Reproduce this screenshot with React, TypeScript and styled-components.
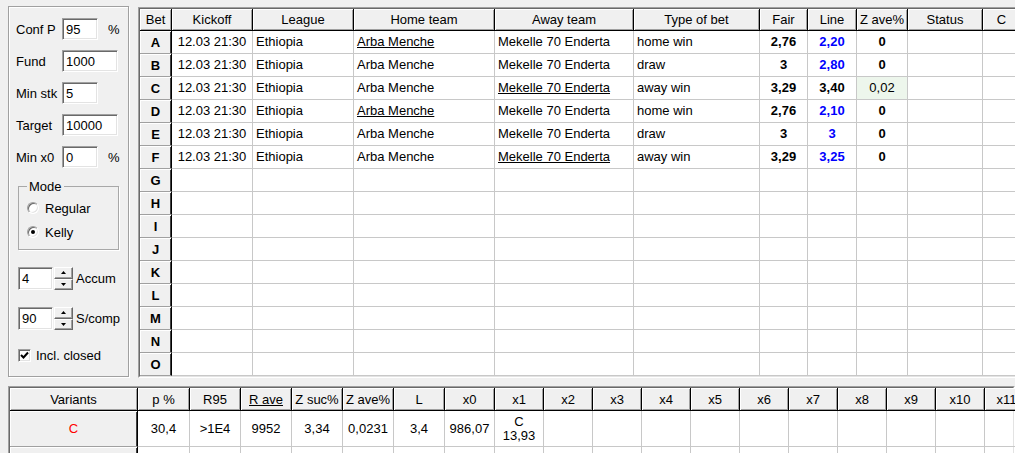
import styled, { createGlobalStyle } from "styled-components";

const GlobalStyle = createGlobalStyle`
  html, body {
    margin: 0;
    background: #f0f0f0;
    overflow: hidden;
  }
  body {
    font-family: "Liberation Sans", Arial, sans-serif;
    font-size: 13px;
    color: #000;
  }
`;

const Screen = styled.div`
  width: 1015px;
  height: 453px;
  box-sizing: border-box;
  padding: 6px 0 0 8px;
  overflow: hidden;
  display: flex;
  flex-direction: column;
  gap: 8px;
`;

const TopArea = styled.div`
  display: flex;
  align-items: flex-start;
  gap: 9px;
`;

const SidePanel = styled.div`
  flex-shrink: 0;
  width: 121px;
  height: 371px;
  box-sizing: border-box;
  border: 1px solid #a0a0a0;
  box-shadow: inset 1px 1px 0 #fff, 1px 1px 0 #fff;
  padding: 11px 0 0 7px;
  display: flex;
  flex-direction: column;
`;

const FieldRow = styled.div`
  display: flex;
  align-items: center;
  height: 22px;
  margin-bottom: 10px;
`;

const FieldLabel = styled.span`
  width: 46px;
  white-space: nowrap;
`;

const Sunken = styled.div`
  box-sizing: border-box;
  background: #fff;
  border: 1px solid;
  border-color: #a0a0a0 #fff #fff #a0a0a0;
  box-shadow: inset 1px 1px 0 #696969, inset -1px -1px 0 #e3e3e3;
`;

const TextBox = styled(Sunken)<{ $w: number; $h?: number }>`
  width: ${({ $w }) => $w}px;
  height: ${({ $h }) => $h ?? 22}px;
  padding-left: 3px;
  display: flex;
  align-items: center;
`;

const Suffix = styled.span`
  margin-left: 10px;
`;

const ModeBox = styled.fieldset`
  margin: 1px 0 0 2px;
  width: 101px;
  box-sizing: border-box;
  border: 1px solid #a8a8a8;
  box-shadow: 1px 1px 0 #fff;
  padding: 2px 0 5px 8px;
`;

const ModeLegend = styled.legend`
  padding: 0 2px;
  line-height: 15px;
`;

const RadioRow = styled.label`
  display: flex;
  align-items: center;
  gap: 6px;
  height: 24px;
`;

const RadioDot = styled(Sunken)<{ $checked: boolean }>`
  width: 12px;
  height: 12px;
  border-radius: 50%;
  display: flex;
  align-items: center;
  justify-content: center;

  &::after {
    content: "";
    width: 4px;
    height: 4px;
    border-radius: 50%;
    background: ${({ $checked }) => ($checked ? "#000" : "transparent")};
  }
`;

const SpinRow = styled.div<{ $top: number }>`
  display: flex;
  align-items: center;
  margin: ${({ $top }) => $top}px 0 0 2px;
  height: 23px;
`;

const SpinButtons = styled.div`
  display: flex;
  flex-direction: column;
  width: 19px;
  height: 23px;
  margin-left: 1px;
`;

const SpinHalf = styled.div`
  flex: 1;
  box-sizing: border-box;
  background: #f0f0f0;
  border: 1px solid;
  border-color: #fff #696969 #696969 #fff;
  box-shadow: inset -1px -1px 0 #a0a0a0;
  display: flex;
  align-items: center;
  justify-content: center;
`;

const SpinLabel = styled.span`
  margin-left: 3px;
`;

const CheckRow = styled.label`
  display: flex;
  align-items: center;
  gap: 5px;
  margin: 18px 0 0 2px;
`;

const CheckBox = styled(Sunken)`
  width: 13px;
  height: 13px;
  display: flex;
  align-items: center;
  justify-content: center;
`;

const GridFrame = styled.div<{ $top?: number }>`
  flex-shrink: 0;
  margin-top: ${({ $top }) => $top ?? 0}px;
  border: 1px solid;
  border-color: #a0a0a0 #fff #fff #a0a0a0;
`;

const GridBody = styled.div<{ $cols: number[]; $rows: string }>`
  border: 1px solid;
  border-color: #696969 #e3e3e3 #e3e3e3 #696969;
  background: #fff;
  display: grid;
  grid-template-columns: ${({ $cols }) => $cols.map((c) => `${c}px`).join(" ")};
  grid-template-rows: ${({ $rows }) => $rows};
`;

const HeadCell = styled.div<{ $underline?: boolean }>`
  box-sizing: border-box;
  background: #f0f0f0;
  border-right: 1px solid #000;
  border-bottom: 1px solid #000;
  box-shadow: inset 1px 1px 0 #fff, inset -1px -1px 0 #a0a0a0;
  display: flex;
  align-items: center;
  justify-content: center;
  white-space: nowrap;
  overflow: hidden;
  text-decoration: ${({ $underline }) => ($underline ? "underline" : "none")};
`;

const RowHead = styled.div<{ $color?: string; $bold?: boolean }>`
  box-sizing: border-box;
  background: #f0f0f0;
  border-right: 1px solid #000;
  border-bottom: 1px solid #a0a0a0;
  box-shadow: inset 1px 1px 0 #fff, inset -1px 0 0 #404040;
  display: flex;
  align-items: center;
  justify-content: center;
  color: ${({ $color }) => $color ?? "#000"};
  font-weight: ${({ $bold }) => ($bold ? 700 : 400)};
`;

const Cell = styled.div<{
  $center?: boolean;
  $bold?: boolean;
  $color?: string;
  $bg?: string;
  $underline?: boolean;
}>`
  box-sizing: border-box;
  border-right: 1px solid #c8c8c8;
  border-bottom: 1px solid #c8c8c8;
  padding: 0 3px;
  background: ${({ $bg }) => $bg ?? "transparent"};
  display: flex;
  flex-direction: column;
  align-items: ${({ $center }) => ($center ? "center" : "flex-start")};
  justify-content: center;
  line-height: 14px;
  white-space: nowrap;
  overflow: hidden;
  font-weight: ${({ $bold }) => ($bold ? 700 : 400)};
  color: ${({ $color }) => $color ?? "#000"};
  text-decoration: ${({ $underline }) => ($underline ? "underline" : "none")};
`;

const MAIN_COLS = [32, 81, 101, 141, 139, 126, 48, 49, 51, 75, 38, 60];
const MAIN_HEAD = ["Bet", "Kickoff", "League", "Home team", "Away team", "Type of bet", "Fair", "Line", "Z ave%", "Status", "C", ""];
const LETTERS = "ABCDEFGHIJKLMNO".split("");

const BETS = [
  { home: true, away: false, type: "home win", fair: "2,76", line: "2,20", blue: true, z: "0" },
  { home: false, away: false, type: "draw", fair: "3", line: "2,80", blue: true, z: "0" },
  { home: false, away: true, type: "away win", fair: "3,29", line: "3,40", blue: false, z: "0,02" },
  { home: true, away: false, type: "home win", fair: "2,76", line: "2,10", blue: true, z: "0" },
  { home: false, away: false, type: "draw", fair: "3", line: "3", blue: true, z: "0" },
  { home: false, away: true, type: "away win", fair: "3,29", line: "3,25", blue: true, z: "0" },
];

const VAR_COLS = [128, 52, 51, 51, 51, 51, 51, 50, 49, 49, 49, 49, 49, 49, 49, 49, 49, 49, 44, 40];
const VAR_HEAD = ["Variants", "p %", "R95", "R ave", "Z suc%", "Z ave%", "L", "x0", "x1", "x2", "x3", "x4", "x5", "x6", "x7", "x8", "x9", "x10", "x11", ""];
const VAR_ROW = ["30,4", ">1E4", "9952", "3,34", "0,0231", "3,4", "986,07"];

function Arrow({ up }: { up: boolean }) {
  return (
    <svg width="5" height="3" viewBox="0 0 5 3">
      <polygon points={up ? "2.5,0 5,3 0,3" : "0,0 5,0 2.5,3"} fill="#000" />
    </svg>
  );
}

function Spin({ value, label, top }: { value: string; label: string; top: number }) {
  return (
    <SpinRow $top={top}>
      <TextBox $w={35} $h={23}>{value}</TextBox>
      <SpinButtons>
        <SpinHalf><Arrow up /></SpinHalf>
        <SpinHalf><Arrow up={false} /></SpinHalf>
      </SpinButtons>
      <SpinLabel>{label}</SpinLabel>
    </SpinRow>
  );
}

function BetGrid() {
  return (
    <GridFrame $top={1}>
      <GridBody $cols={MAIN_COLS} $rows="22px repeat(15, 23px)">
        {MAIN_HEAD.map((h, i) => (
          <HeadCell key={i}>{h}</HeadCell>
        ))}
        {LETTERS.map((letter, r) => {
          const bet = BETS[r];
          if (!bet) {
            return [
              <RowHead key={letter} $bold>{letter}</RowHead>,
              ...MAIN_COLS.slice(1).map((_, c) => <Cell key={`${letter}${c}`} />),
            ];
          }
          return [
            <RowHead key={letter} $bold>{letter}</RowHead>,
            <Cell key={`${letter}k`} $center>12.03 21:30</Cell>,
            <Cell key={`${letter}l`}>Ethiopia</Cell>,
            <Cell key={`${letter}h`} $underline={bet.home}>Arba Menche</Cell>,
            <Cell key={`${letter}a`} $underline={bet.away}>Mekelle 70 Enderta</Cell>,
            <Cell key={`${letter}t`}>{bet.type}</Cell>,
            <Cell key={`${letter}f`} $center $bold>{bet.fair}</Cell>,
            <Cell key={`${letter}n`} $center $bold $color={bet.blue ? "#0000ff" : "#000"}>
              {bet.line}
            </Cell>,
            <Cell key={`${letter}z`} $center $bold={bet.z === "0"} $bg={bet.z === "0" ? undefined : "#edf6ec"}>
              {bet.z}
            </Cell>,
            <Cell key={`${letter}s`} />,
            <Cell key={`${letter}c`} />,
            <Cell key={`${letter}x`} />,
          ];
        })}
      </GridBody>
    </GridFrame>
  );
}

function VariantGrid() {
  return (
    <GridFrame>
      <GridBody $cols={VAR_COLS} $rows="23px 36px 36px">
        {VAR_HEAD.map((h, i) => (
          <HeadCell key={i} $underline={h === "R ave"}>{h}</HeadCell>
        ))}
        <RowHead $color="#ff0000">C</RowHead>
        {VAR_ROW.map((v, i) => (
          <Cell key={i} $center>{v}</Cell>
        ))}
        <Cell $center>
          <span>C</span>
          <span>13,93</span>
        </Cell>
        {VAR_COLS.slice(9).map((_, i) => (
          <Cell key={`e${i}`} />
        ))}
        <RowHead />
        {VAR_COLS.slice(1).map((_, i) => (
          <Cell key={`r${i}`} />
        ))}
      </GridBody>
    </GridFrame>
  );
}

export default function App() {
  return (
    <Screen>
      <GlobalStyle />
      <TopArea>
        <SidePanel>
          <FieldRow>
            <FieldLabel>Conf P</FieldLabel>
            <TextBox $w={36}>95</TextBox>
            <Suffix>%</Suffix>
          </FieldRow>
          <FieldRow>
            <FieldLabel>Fund</FieldLabel>
            <TextBox $w={56}>1000</TextBox>
          </FieldRow>
          <FieldRow>
            <FieldLabel>Min stk</FieldLabel>
            <TextBox $w={36}>5</TextBox>
          </FieldRow>
          <FieldRow>
            <FieldLabel>Target</FieldLabel>
            <TextBox $w={56}>10000</TextBox>
          </FieldRow>
          <FieldRow>
            <FieldLabel>Min x0</FieldLabel>
            <TextBox $w={36}>0</TextBox>
            <Suffix>%</Suffix>
          </FieldRow>

          <ModeBox>
            <ModeLegend>Mode</ModeLegend>
            <RadioRow>
              <RadioDot $checked={false} />
              Regular
            </RadioRow>
            <RadioRow>
              <RadioDot $checked />
              Kelly
            </RadioRow>
          </ModeBox>

          <Spin value="4" label="Accum" top={17} />
          <Spin value="90" label="S/comp" top={17} />

          <CheckRow>
            <CheckBox>
              <svg width="9" height="9" viewBox="0 0 9 9">
                <polyline points="1,4 3.5,6.5 8,1.5" fill="none" stroke="#000" strokeWidth="2" />
              </svg>
            </CheckBox>
            Incl. closed
          </CheckRow>
        </SidePanel>
        <BetGrid />
      </TopArea>
      <VariantGrid />
    </Screen>
  );
}
